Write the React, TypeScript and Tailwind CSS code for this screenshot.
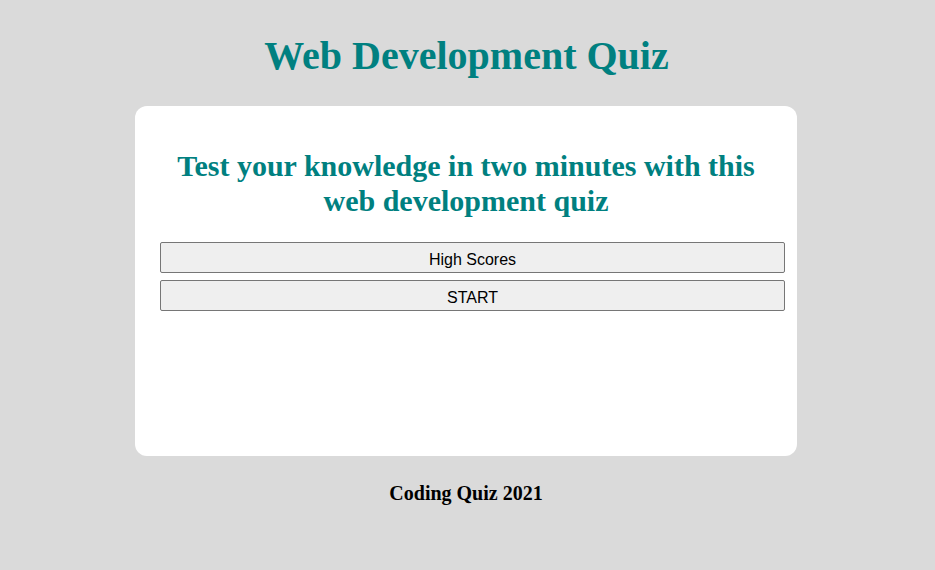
export default function App() {
  return (
    <div className="min-h-[570px] w-full bg-[#dadada] flex flex-col items-center pt-[33px]" style={{ fontFamily: '"Liberation Serif", serif' }}>
      <h1 className="text-[40px] leading-[46px] font-bold text-[#008080] mr-[2px]">Web Development Quiz</h1>
      <div className="mt-[27px] w-[662px] h-[350px] bg-white rounded-[12px] pl-[25px] pt-[42px] mr-[3px]">
        <h2 className="w-[612px] text-[30px] leading-[35px] font-bold text-[#008080] text-center">
          Test your knowledge in two minutes with this web development quiz
        </h2>
        <div className="mt-[24px] flex flex-col gap-[7px]" style={{ fontFamily: '"Liberation Sans", Arial, sans-serif' }}>
          <button className="h-[31px] w-[625px] bg-[#efefef] border border-[#767676] rounded-[2px] text-[16px] leading-[18px] text-black pt-[4px]">High Scores</button>
          <button className="h-[31px] w-[625px] bg-[#efefef] border border-[#767676] rounded-[2px] text-[16px] leading-[18px] text-black pt-[4px]">START</button>
        </div>
      </div>
      <p className="mt-[26px] text-[20px] leading-[23px] font-bold text-black mr-[3px]">Coding Quiz 2021</p>
    </div>
  );
}
